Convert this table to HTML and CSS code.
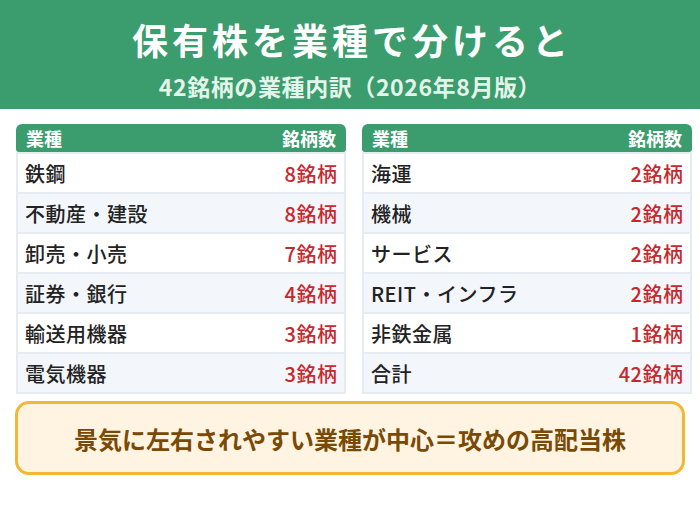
FILE: index.html
```html
<!DOCTYPE html>
<html lang="ja">
<head>
<meta charset="utf-8">
<link rel="stylesheet" href="styles.css">
</head>
<body>
<header class="hero">
  <h1 class="title">保有株を業種で分けると</h1>
  <p class="subtitle">42銘柄の業種内訳（2026年8月版）</p>
</header>
<main class="tables">
  <section class="tbl">
    <div class="tbl-head"><span>業種</span><span>銘柄数</span></div>
    <div class="tbl-body">
      <div class="row"><span class="name">鉄鋼</span><span class="count">8銘柄</span></div>
      <div class="row alt"><span class="name">不動産・建設</span><span class="count">8銘柄</span></div>
      <div class="row"><span class="name">卸売・小売</span><span class="count">7銘柄</span></div>
      <div class="row alt"><span class="name">証券・銀行</span><span class="count">4銘柄</span></div>
      <div class="row"><span class="name">輸送用機器</span><span class="count">3銘柄</span></div>
      <div class="row alt"><span class="name">電気機器</span><span class="count">3銘柄</span></div>
    </div>
  </section>
  <section class="tbl">
    <div class="tbl-head"><span>業種</span><span>銘柄数</span></div>
    <div class="tbl-body">
      <div class="row"><span class="name">海運</span><span class="count">2銘柄</span></div>
      <div class="row alt"><span class="name">機械</span><span class="count">2銘柄</span></div>
      <div class="row"><span class="name">サービス</span><span class="count">2銘柄</span></div>
      <div class="row alt"><span class="name">REIT・インフラ</span><span class="count">2銘柄</span></div>
      <div class="row"><span class="name">非鉄金属</span><span class="count">1銘柄</span></div>
      <div class="row alt"><span class="name">合計</span><span class="count">42銘柄</span></div>
    </div>
  </section>
</main>
<div class="note">景気に左右されやすい業種が中心＝攻めの高配当株</div>
</body>
</html>
```
FILE: styles.css
```css
* { box-sizing: border-box; }
html, body { margin: 0; padding: 0; }
body {
  width: 700px;
  height: 510px;
  background: #ffffff;
  font-family: "Noto Sans CJK JP", "Noto Sans", sans-serif;
  color: #222222;
}
.hero {
  background: #3b9c6d;
  height: 109px;
  display: flex;
  flex-direction: column;
  align-items: center;
  padding-top: 18px;
}
.title {
  margin: 0;
  color: #ffffff;
  font-size: 36px;
  font-weight: 700;
  line-height: 42px;
  letter-spacing: 4px;
  padding-left: 4px;
}
.subtitle {
  margin: 0;
  margin-top: 12px;
  color: #e3f4ea;
  font-size: 23px;
  font-weight: 700;
  line-height: 29px;
  letter-spacing: 0.6px;
}
.tables {
  display: grid;
  grid-template-columns: 330px 330px;
  column-gap: 16px;
  padding: 15px 8px 0 16px;
}
.tbl-head {
  height: 28px;
  background: #3b9c6d;
  border-radius: 6px 6px 3px 3px;
  color: #ffffff;
  font-size: 18px;
  font-weight: 700;
  display: flex;
  justify-content: space-between;
  align-items: center;
  padding: 0 10px;
  line-height: 1;
}
.tbl-body {
  border: 2px solid #e7ecf3;
  background: #e7ecf3;
  display: flex;
  flex-direction: column;
  gap: 2px;
}
.row {
  height: 38px;
  background: #ffffff;
  display: flex;
  justify-content: space-between;
  align-items: center;
  padding: 0 7px;
  font-size: 20px;
  font-weight: 500;
  letter-spacing: 0.5px;
}
.row.alt { background: #f3f6fa; }
.name { color: #222222; }
.count { color: #c6282e; margin-right: -0.5px; }
.note {
  margin: 7px 15px 0 15px;
  height: 74px;
  border: 3px solid #f2b733;
  border-radius: 14px;
  background: #fff4e2;
  color: #7a4a05;
  font-size: 24px;
  font-weight: 700;
  display: flex;
  align-items: center;
  justify-content: center;
}
```
